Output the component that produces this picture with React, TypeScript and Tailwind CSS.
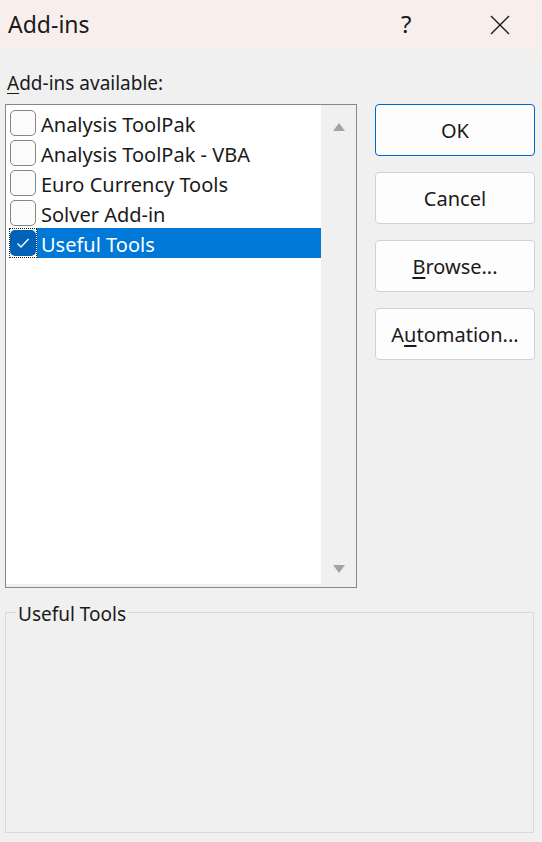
import React from "react";

const items = [
  { label: "Analysis ToolPak", checked: false },
  { label: "Analysis ToolPak - VBA", checked: false },
  { label: "Euro Currency Tools", checked: false },
  { label: "Solver Add-in", checked: false },
  { label: "Useful Tools", checked: true, selected: true },
];

function CheckBox({ checked }: { checked: boolean }) {
  if (checked) {
    return (
      <div className="w-[26px] h-[26px] rounded-[5px] bg-[#0063b8] flex items-center justify-center">
        <svg width="14" height="12" viewBox="0 0 14 12" fill="none">
          <path d="M1.5 6.5 L5 10 L12.5 2" stroke="white" strokeWidth="1.4" />
        </svg>
      </div>
    );
  }
  return <div className="w-[26px] h-[26px] rounded-[5px] border-[1.5px] border-[#858585] bg-[#fbfbfb]" />;
}

function Btn({ children, primary }: { children: React.ReactNode; primary?: boolean }) {
  return (
    <button
      className={
        "w-[160px] h-[52px] rounded-[4px] bg-[#fdfdfd] border text-[20px] text-[#1a1a1a] flex items-center justify-center pt-[2px] " +
        (primary ? "border-[#0067c0]" : "border-[#cfd3d8]")
      }
    >
      {children}
    </button>
  );
}

export default function App() {
  return (
    <div
      className="w-[542px] h-[842px] bg-[#f0f0f0] flex flex-col text-[#1a1a1a]"
      style={{ fontFamily: '"Noto Sans", "Open Sans", sans-serif' }}
    >
      <div className="h-[50px] bg-[#f8efed] flex items-center pl-[8px]">
        <span className="text-[23px] flex-1 leading-none pb-[2px]">Add-ins</span>
        <span className="text-[24px] leading-none w-[12px] mr-[77px] pb-[2px]">?</span>
        <svg width="20" height="20" viewBox="0 0 20 20" className="mr-[32px]">
          <path d="M1 1 L19 19 M19 1 L1 19" stroke="#1a1a1a" strokeWidth="1.4" />
        </svg>
      </div>

      <div className="pl-[7px] mt-[18px] h-[30px] text-[19px] leading-[30px]">
        <span className="underline underline-offset-[3px]">A</span>dd-ins available:
      </div>

      <div className="flex mt-[6px] pl-[5px]">
        <div className="w-[352px] h-[484px] border border-[#828790] bg-[#f0f0f0] flex">
          <div className="flex-1 bg-white mb-[3px] pt-[3px] pl-[3px]">
            {items.map((it) => (
              <div key={it.label} className="h-[30px] flex items-center">
                <div
                  className={
                    "w-[28px] h-[30px] flex items-center justify-center border border-dotted " +
                    (it.selected ? "border-[#222]" : "border-transparent")
                  }
                >
                  <CheckBox checked={it.checked} />
                </div>
                <div
                  className={
                    "flex-1 h-[30px] flex items-center pl-[4px] pt-[3px] text-[20px] " +
                    (it.selected ? "bg-[#0078d7] text-white" : "")
                  }
                >
                  {it.label}
                </div>
              </div>
            ))}
          </div>
          <div className="w-[35px] flex flex-col items-center justify-between pt-[18px] pb-[14px]">
            <svg width="12" height="8" viewBox="0 0 12 8">
              <path d="M6 0 L12 8 L0 8 Z" fill="#a3a3a3" />
            </svg>
            <svg width="12" height="8" viewBox="0 0 12 8">
              <path d="M0 0 L12 0 L6 8 Z" fill="#a3a3a3" />
            </svg>
          </div>
        </div>

        <div className="ml-[18px] flex flex-col gap-[16px]">
          <Btn primary>OK</Btn>
          <Btn>Cancel</Btn>
          <Btn>
            <span>
              <span className="underline underline-offset-[3px]">B</span>rowse...
            </span>
          </Btn>
          <Btn>
            <span>
              A<span className="underline underline-offset-[3px]">u</span>tomation...
            </span>
          </Btn>
        </div>
      </div>

      <fieldset className="ml-[5px] mt-[11px] w-[529px] h-[234px] border border-[#d9d9d9]">
        <legend className="ml-[10px] px-[2px] text-[19px] leading-[24px] pt-[3px]">Useful Tools</legend>
      </fieldset>
    </div>
  );
}
